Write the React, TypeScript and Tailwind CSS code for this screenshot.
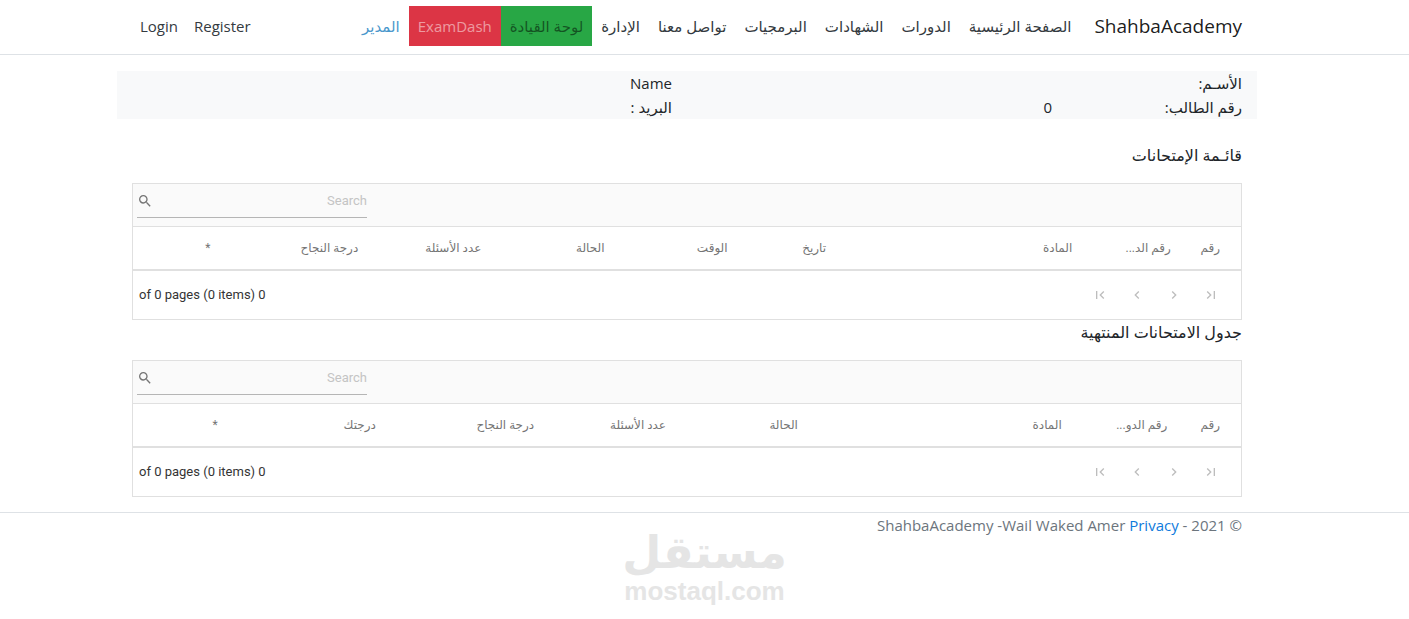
import { useState } from "react"

type Column = {
    title: string
    size: number
}

type GridProps = {
    columns: Column[]
    label: string
}

const navLinks = [
    "الصفحة الرئيسية",
    "الدورات",
    "الشهادات",
    "البرمجيات",
    "تواصل معنا",
    "الإدارة",
]

const examColumns: Column[] = [
    { title: "رقم", size: 1 },
    { title: "رقم الد...", size: 2 },
    { title: "المادة", size: 5 },
    { title: "تاريخ", size: 2 },
    { title: "الوقت", size: 2.5 },
    { title: "الحالة", size: 2.5 },
    { title: "عدد الأسئلة", size: 2.5 },
    { title: "درجة النجاح", size: 3 },
    { title: "*", size: 2 },
]

const finishedColumns: Column[] = [
    { title: "رقم", size: 1 },
    { title: "رقم الدو...", size: 2 },
    { title: "المادة", size: 5 },
    { title: "الحالة", size: 2.5 },
    { title: "عدد الأسئلة", size: 2.5 },
    { title: "درجة النجاح", size: 3 },
    { title: "درجتك", size: 3 },
    { title: "*", size: 2 },
]

const pagerIcons = [
    { name: "First page", path: "M18.41 16.59L13.82 12l4.59-4.59L17 6l-6 6 6 6zM6 6h2v12H6z" },
    { name: "Previous page", path: "M15.41 7.41L14 6l-6 6 6 6 1.41-1.41L10.83 12z" },
    { name: "Next page", path: "M10 6L8.59 7.41 13.17 12l-4.58 4.59L10 18l6-6z" },
    { name: "Last page", path: "M5.59 7.41L10.18 12l-4.59 4.59L7 18l6-6-6-6zM16 6h2v12h-2z" },
]

const Container = ({ children, className = "" }: { children: React.ReactNode, className?: string }) => (
    <div className="pr-[35px]">
        <div className={`mx-auto max-w-[1140px] px-[15px] ${className}`}>{children}</div>
    </div>
)

const Header = () => (
    <header className="border-b border-[#dee2e6] bg-white pt-1.5 pb-2">
        <Container className="flex items-center">
            <a href="#" className="ml-3.5 text-[19px] leading-[30px] text-black/90">ShahbaAcademy</a>
            <nav className="flex grow items-center whitespace-nowrap">
                {navLinks.map((link) => (
                    <a key={link} href="#" className="px-[9px] py-2 text-[#343a40]">{link}</a>
                ))}
                <a href="#" className="bg-[#28a745] px-[9px] py-2 text-black/50">لوحة القيادة</a>
                <a href="#" className="bg-[#dc3545] px-[9px] py-2 text-white/50">ExamDash</a>
                <a href="#" className="px-[9px] py-2 text-[#4a97cc]">المدير</a>
            </nav>
            <nav className="flex items-center">
                <a href="#" className="px-2 py-2 text-[#343a40]">Register</a>
                <a href="#" className="px-2 py-2 text-[#343a40]">Login</a>
            </nav>
        </Container>
    </header>
)

const DataGrid = ({ columns, label }: GridProps) => {
    const [query, setQuery] = useState("")
    const total = columns.reduce((sum, col) => sum + col.size, 0)

    return (
        <div className="border border-[#e0e0e0] bg-white font-['Roboto','DejaVu_Sans',sans-serif] text-[13px]">
            <div className="flex h-[43px] justify-end border-b border-[#e0e0e0] bg-[#fafafa] px-1">
                <label className="flex h-[34px] w-[230px] flex-row-reverse items-center border-b border-[#b5b5b5]">
                    <svg viewBox="0 0 24 24" className="size-4 shrink-0 fill-[#757575]">
                        <path d="M15.5 14h-.79l-.28-.27A6.471 6.471 0 0 0 16 9.5 6.5 6.5 0 1 0 9.5 16c1.61 0 3.09-.59 4.23-1.57l.27.28v.79l5 4.99L20.49 19l-4.99-5zm-6 0C7.01 14 5 11.99 5 9.5S7.01 5 9.5 5 14 7.01 14 9.5 11.99 14 9.5 14z" />
                    </svg>
                    <input
                        type="text"
                        aria-label={label}
                        placeholder="Search"
                        value={query}
                        onChange={(e) => setQuery(e.target.value)}
                        className="w-full min-w-0 bg-transparent text-right outline-none placeholder:text-[#c4c4c4]"
                    />
                </label>
            </div>
            <table className="w-full table-fixed border-collapse" aria-label={label}>
                <colgroup>
                    {columns.map((col) => (
                        <col key={col.title} style={{ width: `${(col.size / total) * 100}%` }} />
                    ))}
                </colgroup>
                <thead>
                    <tr className="h-[42px]">
                        {columns.map((col) => (
                            <th key={col.title} className="pr-[21px] text-right text-xs font-normal whitespace-nowrap text-[#757575]">{col.title}</th>
                        ))}
                    </tr>
                </thead>
            </table>
            <div className="flex h-[50px] items-center justify-between border-t-2 border-[#e0e0e0] pr-[22px] pl-1.5" dir="ltr">
                <span className="text-[#343434]">of 0 pages (0 items) 0</span>
                <div className="flex items-center gap-[21px]">
                    {pagerIcons.map((icon) => (
                        <button key={icon.name} type="button" aria-label={icon.name} className="size-4">
                            <svg viewBox="0 0 24 24" className="size-4 fill-[#bdbdbd]">
                                <path d={icon.path} />
                            </svg>
                        </button>
                    ))}
                </div>
            </div>
        </div>
    )
}

const Watermark = () => (
    <div className="flex flex-col items-center font-bold text-[#e5e5e5]">
        <span className="font-['DejaVu_Sans',sans-serif] text-[45px] leading-8">مستقل</span>
        <span className="mt-2 font-['Liberation_Sans',sans-serif] text-[26px] leading-7">mostaql.com</span>
    </div>
)

export default () => {
    return (
        <div dir="rtl" className="bg-white font-['Open_Sans','DejaVu_Sans',sans-serif] text-[15px] leading-6 text-[#212529]">
            <Header />
            <main className="mt-4">
                <Container>
                    <div className="-mx-[15px] grid grid-cols-12 bg-[#f8f9fa]">
                        <div className="col-span-2 px-[15px]">الأسـم:</div>
                        <div className="col-span-4 px-[15px]"></div>
                        <div className="col-span-6 px-[15px]">Name</div>
                        <div className="col-span-2 px-[15px]">رقم الطالب:</div>
                        <div className="col-span-4 px-[15px]">0</div>
                        <div className="col-span-6 px-[15px]">البريد :</div>
                    </div>
                    <h2 className="mt-6 mb-4 text-[16px] leading-6">قائـمة الإمتحانات</h2>
                    <DataGrid columns={examColumns} label="قائـمة الإمتحانات" />
                    <h2 className="mb-4 text-[16px] leading-6">جدول الامتحانات المنتهية</h2>
                    <DataGrid columns={finishedColumns} label="جدول الامتحانات المنتهية" />
                </Container>
            </main>
            <footer className="mt-[15px] border-t border-[#dee2e6] text-[#6c757d]">
                <Container>
                    <p dir="ltr" className="text-right">
                        ShahbaAcademy -Wail Waked Amer <a href="#" className="text-[#0f7bdc]">Privacy</a> - 2021 ©
                    </p>
                </Container>
                <Watermark />
            </footer>
        </div>
    )
}
